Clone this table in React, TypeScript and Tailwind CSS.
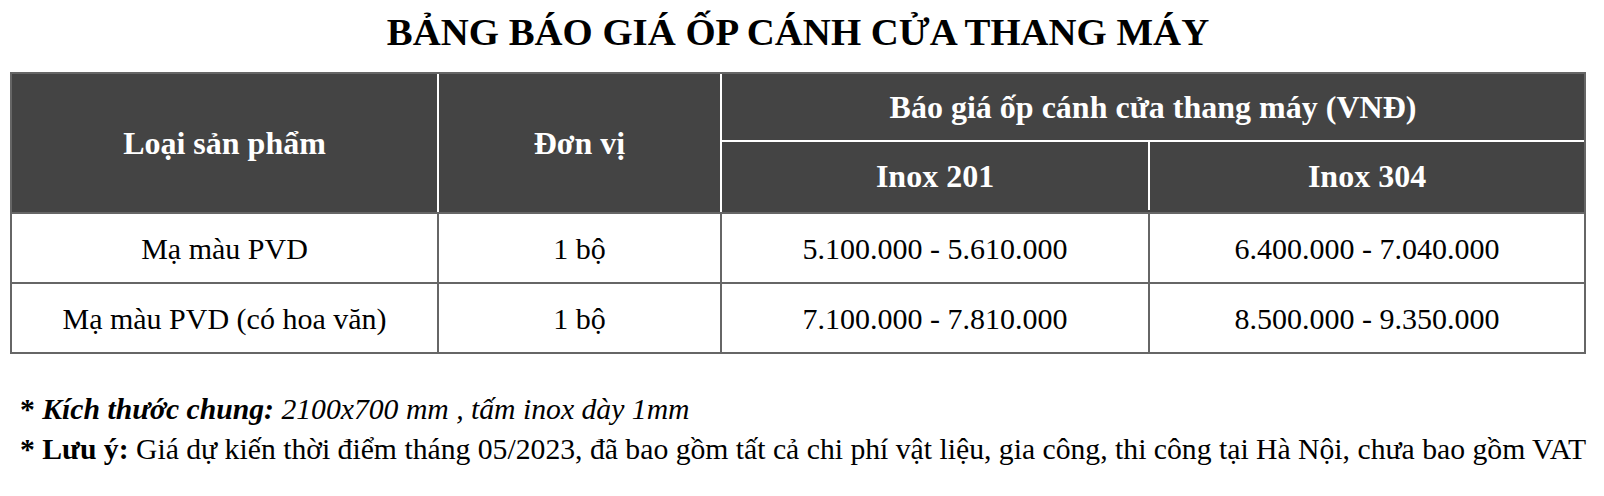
export default function App() {
  const rows = [
    ["Mạ màu PVD", "1 bộ", "5.100.000 - 5.610.000", "6.400.000 - 7.040.000"],
    ["Mạ màu PVD (có hoa văn)", "1 bộ", "7.100.000 - 7.810.000", "8.500.000 - 9.350.000"],
  ];
  return (
    <div className="w-[1604px] h-[496px] bg-white text-black font-['Liberation_Serif','Times_New_Roman',serif] overflow-hidden">
      <div className="ml-[10px] w-[1576px]">
        <h1 className="h-[72px] pt-[10px] text-center font-bold text-[38.8px] leading-[44px]">
          BẢNG BÁO GIÁ ỐP CÁNH CỬA THANG MÁY
        </h1>
        <div className="border-2 border-[#666666]">
          <div className="flex bg-[#444444] text-white font-bold text-[32px] border-b-2 border-[#666666]">
            <div className="w-[427px] h-[138px] flex items-center justify-center border-r-2 border-white">
              Loại sản phẩm
            </div>
            <div className="w-[283px] h-[138px] flex items-center justify-center border-r-2 border-white">
              Đơn vị
            </div>
            <div className="flex-1 flex flex-col">
              <div className="h-[68px] flex items-center justify-center border-b-2 border-white">
                Báo giá ốp cánh cửa thang máy (VNĐ)
              </div>
              <div className="flex h-[68px]">
                <div className="w-[428px] flex items-center justify-center border-r-2 border-white">
                  Inox 201
                </div>
                <div className="flex-1 flex items-center justify-center">Inox 304</div>
              </div>
            </div>
          </div>
          {rows.map((r, i) => (
            <div
              key={i}
              className={
                i === 0
                  ? "flex h-[70px] text-[30px] border-b-2 border-[#666666]"
                  : "flex h-[68px] text-[30px]"
              }
            >
              <div className="w-[427px] flex items-center justify-center border-r-2 border-[#666666]">{r[0]}</div>
              <div className="w-[283px] flex items-center justify-center border-r-2 border-[#666666]">{r[1]}</div>
              <div className="w-[428px] flex items-center justify-center border-r-2 border-[#666666]">{r[2]}</div>
              <div className="flex-1 flex items-center justify-center">{r[3]}</div>
            </div>
          ))}
        </div>
        <div className="mt-[35px] pl-[10px] text-[29.7px] leading-[40px] whitespace-nowrap">
          <p>
            <span className="font-bold">* </span>
            <span className="font-bold italic">Kích thước chung:</span>
            <span className="italic"> 2100x700 mm , tấm inox dày 1mm</span>
          </p>
          <p>
            <span className="font-bold">* Lưu ý:</span> Giá dự kiến thời điểm tháng 05/2023, đã bao gồm tất cả chi phí vật liệu, gia công, thi công tại Hà Nội, chưa bao gồm VAT
          </p>
        </div>
      </div>
    </div>
  );
}
